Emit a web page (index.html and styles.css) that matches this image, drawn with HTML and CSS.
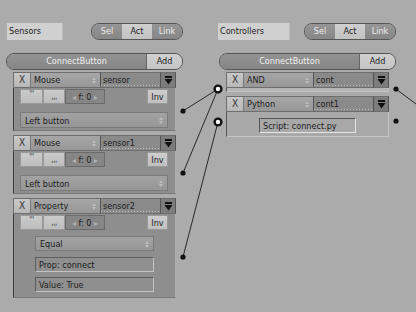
FILE: index.html
```html
<!DOCTYPE html>
<html>
<head>
    <meta charset="UTF-8">
    <title>Logic</title>
    <link rel="stylesheet" href="styles.css">
</head>
<body>
    <div class="logic">
        <section class="col sensors">
            <div class="colhead">
                <div class="title">Sensors</div>
                <div class="seg"><span>Sel</span><span class="on">Act</span><span>Link</span></div>
            </div>
            <div class="addbar"><span class="cb">ConnectButton</span><span class="add">Add</span></div>
            <div class="bricks">
                <div class="brick">
                    <div class="bhead">
                        <span class="x">X</span>
                        <span class="menu">Mouse<i class="ud"></i></span>
                        <span class="name">sensor</span>
                        <span class="tri"><svg width="9" height="9" viewBox="0 0 9 9"><rect x="1" y="0" width="7" height="2" fill="#111"/><path d="M0.5 3h8l-4 5.5z" fill="#111"/></svg></span>
                    </div>
                    <div class="bbody">
                        <div class="pulse"><span class="pb top">'''</span><span class="pb bot">,,,</span><span class="freq"><b>◂</b> f: 0 <b>▸</b></span><span class="inv">Inv</span></div>
                        <div class="drop">Left button<i class="ud"></i></div>
                    </div>
                </div>
                <div class="brick">
                    <div class="bhead">
                        <span class="x">X</span>
                        <span class="menu">Mouse<i class="ud"></i></span>
                        <span class="name">sensor1</span>
                        <span class="tri"><svg width="9" height="9" viewBox="0 0 9 9"><rect x="1" y="0" width="7" height="2" fill="#111"/><path d="M0.5 3h8l-4 5.5z" fill="#111"/></svg></span>
                    </div>
                    <div class="bbody">
                        <div class="pulse"><span class="pb top">'''</span><span class="pb bot">,,,</span><span class="freq"><b>◂</b> f: 0 <b>▸</b></span><span class="inv">Inv</span></div>
                        <div class="drop">Left button<i class="ud"></i></div>
                    </div>
                </div>
                <div class="brick">
                    <div class="bhead">
                        <span class="x">X</span>
                        <span class="menu">Property<i class="ud"></i></span>
                        <span class="name">sensor2</span>
                        <span class="tri"><svg width="9" height="9" viewBox="0 0 9 9"><rect x="1" y="0" width="7" height="2" fill="#111"/><path d="M0.5 3h8l-4 5.5z" fill="#111"/></svg></span>
                    </div>
                    <div class="bbody tall">
                        <div class="pulse"><span class="pb top">'''</span><span class="pb bot">,,,</span><span class="freq"><b>◂</b> f: 0 <b>▸</b></span><span class="inv">Inv</span></div>
                        <div class="props">
                            <div class="drop">Equal<i class="ud"></i></div>
                            <div class="field">Prop: connect</div>
                            <div class="field">Value: True</div>
                        </div>
                    </div>
                </div>
            </div>
        </section>
        <section class="col ctrls">
            <div class="colhead">
                <div class="title">Controllers</div>
                <div class="seg"><span>Sel</span><span class="on">Act</span><span>Link</span></div>
            </div>
            <div class="addbar"><span class="cb">ConnectButton</span><span class="add">Add</span></div>
            <div class="bricks">
                <div class="brick">
                    <div class="bhead">
                        <span class="x">X</span>
                        <span class="menu">AND<i class="ud"></i></span>
                        <span class="name">cont</span>
                        <span class="tri"><svg width="9" height="9" viewBox="0 0 9 9"><rect x="1" y="0" width="7" height="2" fill="#111"/><path d="M0.5 3h8l-4 5.5z" fill="#111"/></svg></span>
                    </div>
                    <div class="cbody thin"></div>
                </div>
                <div class="brick">
                    <div class="bhead">
                        <span class="x">X</span>
                        <span class="menu">Python<i class="ud"></i></span>
                        <span class="name">cont1</span>
                        <span class="tri"><svg width="9" height="9" viewBox="0 0 9 9"><rect x="1" y="0" width="7" height="2" fill="#111"/><path d="M0.5 3h8l-4 5.5z" fill="#111"/></svg></span>
                    </div>
                    <div class="cbody"><div class="script">Script: connect.py</div></div>
                </div>
            </div>
        </section>
    </div>
    <svg class="wires" width="416" height="312" viewBox="0 0 416 312">
        <g stroke="#1a1a1a" stroke-width="0.9" fill="none">
            <path d="M183 111L218 89"/>
            <path d="M183 173L218 89"/>
            <path d="M183 257L218 122"/>
            <path d="M396 89L420 107"/>
        </g>
        <g fill="#111">
            <circle cx="183" cy="111" r="2.6"/>
            <circle cx="183" cy="173" r="2.6"/>
            <circle cx="183" cy="257" r="2.6"/>
            <circle cx="396" cy="89" r="2.6"/>
            <circle cx="396" cy="121" r="2.6"/>
        </g>
        <g fill="#fff" stroke="#111" stroke-width="2.4">
            <circle cx="218" cy="89" r="3.4"/>
            <circle cx="218" cy="122" r="3.4"/>
        </g>
    </svg>
</body>
</html>
```

FILE: styles.css
```css
*{margin:0;padding:0;box-sizing:border-box}
body{width:416px;height:312px;overflow:hidden;background:#ababab;font-family:"DejaVu Sans Condensed","DejaVu Sans",sans-serif;font-stretch:condensed;font-size:9px;color:#1c1c1c;position:relative}
.logic{display:flex;gap:36px;padding:23px 0 0 6px}
.col{width:177px}
.colhead{display:flex;justify-content:space-between;height:17px}
.title{width:56px;margin-left:1px;background:#d0d0d0;padding:3px 0 0 2px;border-right:1px solid #bcbcbc}
.ctrls .title{width:72px;margin-left:-1px}
.seg{display:flex;width:92px;height:17px;border:1px solid #555;border-radius:8px;overflow:hidden}
.seg span{flex:1;text-align:center;padding-top:2px;background:linear-gradient(#969696,#868686);color:#eee}
.seg span.on{background:linear-gradient(#cfcfcf,#c2c2c2);color:#1c1c1c}
.addbar{display:flex;height:17px;margin-top:13px;border:1px solid #555;border-radius:8px;overflow:hidden}
.cb{flex:1;text-align:center;padding-top:2px;background:linear-gradient(#939393,#858585);color:#f0f0f0;border-right:1px solid #666}
.add{width:35px;text-align:center;padding-top:2px;background:linear-gradient(#d0d0d0,#c4c4c4)}
.bricks{margin:2px 7px 0}
.brick+.brick{margin-top:4px}
.bhead{display:flex;height:16px}
.bhead span{padding-top:2px;border-top:1px solid #6e6e6e;border-bottom:1px solid #6e6e6e}
.x{width:17px;text-align:center;background:linear-gradient(#c8c8c8,#b8b8b8);border-left:1px solid #6e6e6e;font-size:10px;padding-top:1px!important;color:#333}
.menu{width:70px;position:relative;padding-left:3px;background:linear-gradient(#a6a6a6,#979797);border-left:1px solid #777}
.name{width:60px;padding-left:2px;background:#8a8a8a;border-left:1px solid #555;background-image:linear-gradient(90deg,#c0c0c0 1px,transparent 1px);background-size:3px 1px;background-repeat:repeat-x;background-position:30px 12px}
.tri{width:16px;display:flex;justify-content:center;padding-top:3px!important;background:#7c7c7c;border-left:1px solid #555;border-right:1px solid #555}
.ud{position:absolute;right:3px;top:4px;width:5px;height:7px}
.ud:before,.ud:after{content:"";position:absolute;left:0;border-left:2.5px solid transparent;border-right:2.5px solid transparent}
.ud:before{top:0;border-bottom:3px solid #bdbdbd}
.ud:after{bottom:0;border-top:3px solid #bdbdbd}
.bbody{height:43px;background:#8e8e8e;border-left:1px solid #3e3e3e;border-right:1px solid #b0b0b0;border-bottom:1px solid #777;padding:1px 7px 0 6px}
.bbody.tall{height:84px}
.pulse{display:flex;height:15px}
.pb{width:23px;text-align:center;background:linear-gradient(#cbcbcb,#bdbdbd);color:#444;font-size:8px;line-height:8px;border:1px solid #999;letter-spacing:-0.5px}
.pb+.pb{width:22px}
.pb.top{padding-top:1px}
.pb.bot{padding-top:3px}
.freq{width:40px;text-align:center;padding-top:2px;background:#868686;border:1px solid #6a6a6a;color:#1c1c1c}
.freq b{font-weight:normal;color:#b3b3b3;font-size:8px}
.inv{margin-left:auto;width:21px;text-align:center;padding-top:2px;background:linear-gradient(#cdcdcd,#c0c0c0);border:1px solid #999}
.drop{position:relative;height:16px;margin-top:8px;padding:3px 0 0 4px;background:linear-gradient(#a2a2a2,#969696);border:1px solid #7a7a7a}
.props{margin-left:15px;width:119px;padding-top:6px}
.props .drop{margin-top:0;height:15px;padding-top:2px}
.field{height:15px;margin-top:6px;padding:2px 0 0 3px;background:#8f8f8f;border:1px solid #5e5e5e;border-right-color:#c4c4c4;border-bottom-color:#c4c4c4}
.field+.field{margin-top:5px}
.cbody{height:25px;background:#a9a9a9;border-left:1px solid #555;border-right:1px solid #c4c4c4;border-bottom:1px solid #c4c4c4;padding:6px 0 0 32px}
.cbody.thin{height:4px;padding:0;background:#b6b6b6}
.script{width:97px;height:15px;padding:2px 0 0 3px;background:#a8a8a8;border:1px solid #555;border-right-color:#e6e6e6;border-bottom-color:#e6e6e6}
.wires{position:absolute;left:0;top:0;pointer-events:none}
```
